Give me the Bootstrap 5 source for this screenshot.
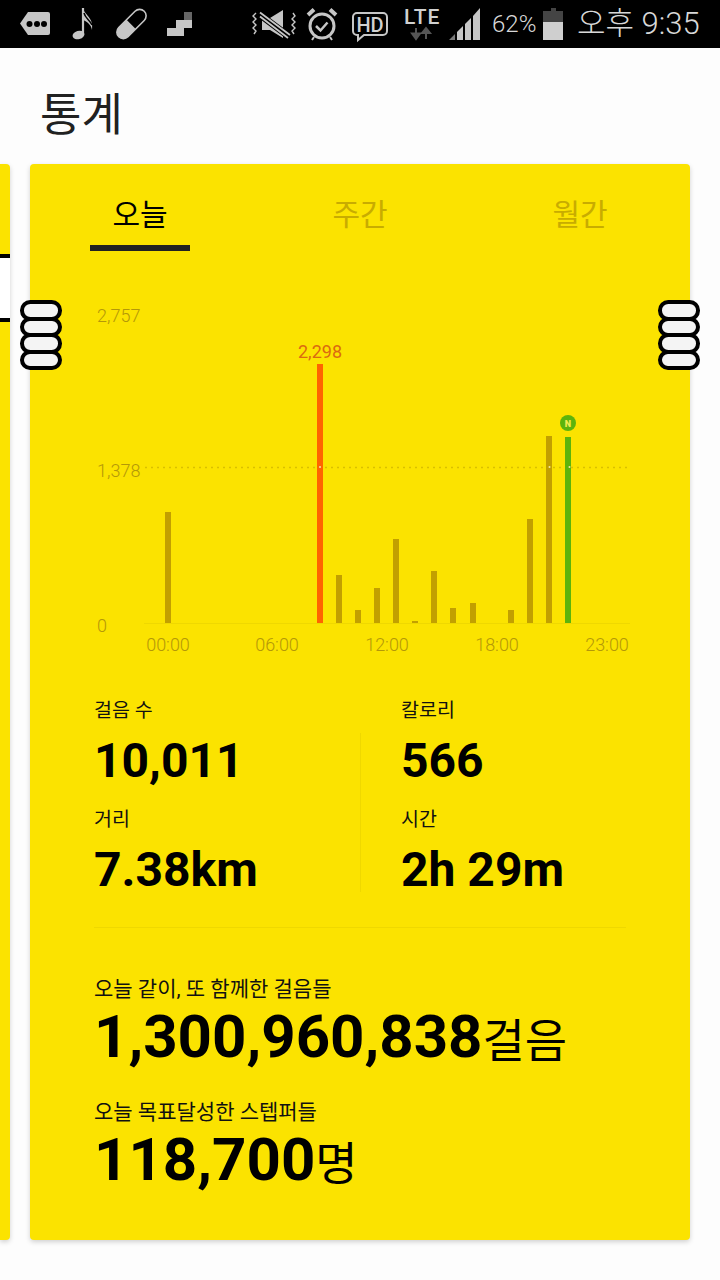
<!DOCTYPE html>
<html lang="ko">
<head>
  <meta charset="UTF-8">
  <title>통계</title>
  <link href="https://cdn.jsdelivr.net/npm/bootstrap@5.3.0/dist/css/bootstrap.min.css" rel="stylesheet">
  <style>
    body {
      width: 720px;
      height: 1280px;
      overflow: hidden;
      background: #fdfdfd;
      font-family: Roboto, "Noto Sans CJK KR", sans-serif;
      color: #000;
    }
    .status-bar {
      height: 48px;
      background: #000;
      color: #d8d8d8;
      padding: 0 20px;
    }
    .status-icons-right { margin-left: 59px; }
    .status-pct { font-size: 24px; font-weight: 300; margin-left: 12px; width: 45px; }
    .status-battery { margin-left: 6px; }
    .status-time { font-size: 31px; font-weight: 300; margin-left: 14px; white-space: nowrap; }
    .page-title {
      height: 116px;
      margin: 0;
      padding: 40px 0 0 40px;
      font-size: 45px;
      line-height: 56px;
      font-weight: 400;
      color: #212121;
    }
    .pager { height: 1076px; gap: 20px; }
    .stat-panel {
      background: #fbe300;
      border-radius: 4px;
      box-shadow: 0 2px 5px rgba(0, 0, 0, .18);
    }
    .prev-panel {
      width: 10px;
      padding-top: 90px;
      border-radius: 0 4px 4px 0;
    }
    .prev-hole {
      height: 68px;
      background: #fff;
      border-top: 4px solid #000;
      border-bottom: 4px solid #000;
    }
    .main-panel { width: 660px; }
    .tab-row { height: 87px; }
    .tab-item {
      width: 220px;
      padding-top: 30px;
      font-size: 30px;
      line-height: 42px;
      text-align: center;
      color: #c8ac00;
    }
    .tab-item.is-on { color: #000; }
    .tab-line {
      display: block;
      width: 100px;
      height: 6px;
      margin: 9px auto 0;
      background: #212121;
    }
    .chart-box { display: block; margin-top: 49px; }
    .stat-grid {
      display: grid;
      grid-template-columns: 266px 41px 1fr;
      margin: 34px 64px 0;
      padding-bottom: 27px;
      border-bottom: 1px solid #efd800;
    }
    .stat-rule {
      grid-column: 2;
      grid-row: 2 / 5;
      margin: 7px 0 8px;
      border-left: 1px solid #efd800;
    }
    .stat-label { font-size: 19.500px; line-height: 30px; color: #111; }
    .stat-value { font-size: 48px; line-height: 60px; font-weight: 700; margin: 5px 0 14px; }
    .stat-value.is-last { margin-bottom: 0; }
    .stat-a { grid-column: 1; }
    .stat-b { grid-column: 3; }
    .total-box { padding: 46px 64px 0; }
    .total-label { font-size: 21px; line-height: 30px; color: #111; }
    .total-value { font-size: 60px; line-height: 70px; font-weight: 700; margin: -2px 0 21px; white-space: nowrap; }
    .total-unit { font-size: 46px; font-weight: 400; }
    .ring-stack { position: absolute; top: 300px; width: 42px; }
    .ring-left { left: 20px; }
    .ring-right { left: 658px; }
    .ring-item {
      height: 20.500px;
      margin-bottom: -4px;
      background: #f4f4f4;
      border: 4px solid #000;
      border-radius: 10.250px;
    }
  </style>
</head>
<body class="position-relative">

<div class="status-bar d-flex align-items-center">
  <svg width="172" height="32" viewBox="20 8 172 32">
    <path d="M28 12H48a2 2 0 0 1 2 2V33a2 2 0 0 1-2 2H28L20 23.500Z" fill="#c6c6c6"/>
    <circle cx="29.500" cy="24" r="3" fill="#000"/><circle cx="37" cy="24" r="3" fill="#000"/><circle cx="44" cy="24" r="3" fill="#000"/>
    <ellipse cx="78.500" cy="35" rx="6" ry="4.200" fill="#c6c6c6" transform="rotate(-15 78.500 35)"/>
    <path d="M83 8V35" stroke="#c6c6c6" stroke-width="2.200"/>
    <path d="M83 8C84 15 94 17 92 30C91 25 88 22 83 20Z" fill="#c6c6c6"/>
    <path d="M84 13C85 18 90 20 92 25" stroke="#000" stroke-width="1.500" fill="none"/>
    <g transform="rotate(-45 131.500 24)">
      <rect x="113.500" y="17.500" width="36" height="13" rx="6.500" fill="none" stroke="#c6c6c6" stroke-width="1.600"/>
      <path d="M131 17.500H120a6.500 6.500 0 0 0 0 13H131Z" fill="#c6c6c6"/>
    </g>
    <path d="M167 28H176V20H192V28H184V36H167Z" fill="#c6c6c6"/>
    <rect x="184" y="12" width="8" height="8" fill="#666"/>
  </svg>
  <svg class="status-icons-right" width="229" height="48" viewBox="251 0 229 48">
    <path d="M256 13l-3 3 3 3-3 3 3 3-3 3 3 3-2 3M293 13l2 3-3 3 3 3-3 3 3 3-3 3 2 3" fill="none" stroke="#c6c6c6" stroke-width="1.400"/>
    <path d="M262 18H270L283 10V38L270 30H262Z" fill="#c6c6c6"/>
    <path d="M259 14L291 38" stroke="#000" stroke-width="7"/>
    <path d="M260 12.500L290 35M260 16.500L288 38" stroke="#c6c6c6" stroke-width="1.800"/>
    <circle cx="322" cy="26" r="12" fill="none" stroke="#c6c6c6" stroke-width="3"/>
    <path d="M316 26l4.500 4.500 7-8" fill="none" stroke="#c6c6c6" stroke-width="2.500"/>
    <path d="M308 15L314 9.500M336 15L330 9.500" stroke="#c6c6c6" stroke-width="4"/>
    <path d="M314 37l-2 3M330 37l2 3" stroke="#c6c6c6" stroke-width="2"/>
    <path d="M357 13H383a4 4 0 0 1 4 4V31a4 4 0 0 1-4 4H364L358 40V35H357a4 4 0 0 1-4-4V17a4 4 0 0 1 4-4Z" fill="none" stroke="#c6c6c6" stroke-width="2"/>
    <text x="370" y="31.500" text-anchor="middle" font-family="Roboto, sans-serif" font-size="20" font-weight="500" fill="#d0d0d0">HD</text>
    <text x="404" y="24" font-family="Roboto, sans-serif" font-size="21" font-weight="500" letter-spacing="1" fill="#d0d0d0">LTE</text>
    <path d="M416 28V37M412 33.500L416 39L420 33.500Z" stroke="#555" stroke-width="2" fill="#555"/>
    <path d="M426 39V30M422 33L426 28L430 33Z" stroke="#555" stroke-width="2" fill="#555"/>
    <path d="M449 40L455 34V40Z" fill="#777"/>
    <path d="M457 32L463 26V40H457Z" fill="#c6c6c6"/>
    <path d="M465 24L471 18V40H465Z" fill="#c6c6c6"/>
    <path d="M473 16L480 8V40H473Z" fill="#c6c6c6"/>
  </svg>
  <span class="status-pct">62%</span>
  <svg class="status-battery" width="20" height="32" viewBox="543 8 20 32">
    <path d="M551 8H556V11H563V22H543V11H551Z" fill="#444"/>
    <rect x="543" y="22" width="20" height="18" fill="#cfcfcf"/>
  </svg>
  <span class="status-time">오후 9:35</span>
</div>

<h1 class="page-title">통계</h1>

<div class="pager d-flex">
  <div class="stat-panel prev-panel flex-shrink-0">
    <div class="prev-hole"></div>
  </div>

  <div class="stat-panel main-panel flex-shrink-0">
    <div class="tab-row d-flex">
      <div class="tab-item is-on">오늘<span class="tab-line"></span></div>
      <div class="tab-item">주간</div>
      <div class="tab-item">월간</div>
    </div>

    <svg class="chart-box" width="660" height="362" viewBox="30 300 660 362" font-family="Roboto, sans-serif" font-size="18" font-weight="300" fill="#b49808">
      <path d="M144 623.500H630" stroke="#efd800" stroke-width="1"/>
      <path d="M145 467.500H630" stroke="#d9c000" stroke-width="1.500" stroke-dasharray="2 4"/>
      <text x="97" y="322">2,757</text>
      <text x="97" y="476.500">1,378</text>
      <text x="97" y="632">0</text>
      <g fill="#c2a000">
        <rect x="165" y="512" width="6" height="111"/>
        <rect x="336" y="575" width="6" height="48"/>
        <rect x="355" y="610" width="6" height="13"/>
        <rect x="374" y="588" width="6" height="35"/>
        <rect x="393" y="539" width="6" height="84"/>
        <rect x="412" y="621" width="6" height="2"/>
        <rect x="431" y="571" width="6" height="52"/>
        <rect x="450" y="608" width="6" height="15"/>
        <rect x="470" y="603" width="6" height="20"/>
        <rect x="508" y="610" width="6" height="13"/>
        <rect x="527" y="519" width="6" height="104"/>
        <rect x="546" y="436" width="6" height="187"/>
      </g>
      <rect x="317" y="364" width="6" height="259" fill="#ff6400"/>
      <rect x="565" y="437" width="6" height="186" fill="#5cb40c"/>
      <g fill="#f5e9a0">
        <circle cx="320" cy="467" r="1"/><circle cx="549.500" cy="467" r="1"/><circle cx="569.500" cy="467" r="1"/>
      </g>
      <text x="320" y="358" text-anchor="middle" fill="#dc6a10" font-weight="400">2,298</text>
      <circle cx="568" cy="423" r="8" fill="#5cb40c"/>
      <text x="568" y="426.500" text-anchor="middle" font-size="9" font-weight="900" fill="#f3ec50">N</text>
      <text x="168" y="651" text-anchor="middle">00:00</text>
      <text x="277" y="651" text-anchor="middle">06:00</text>
      <text x="387" y="651" text-anchor="middle">12:00</text>
      <text x="497" y="651" text-anchor="middle">18:00</text>
      <text x="607" y="651" text-anchor="middle">23:00</text>
    </svg>

    <div class="stat-grid">
      <div class="stat-label stat-a">걸음 수</div>
      <div class="stat-label stat-b">칼로리</div>
      <div class="stat-rule"></div>
      <div class="stat-value stat-a">10,011</div>
      <div class="stat-value stat-b">566</div>
      <div class="stat-label stat-a">거리</div>
      <div class="stat-label stat-b">시간</div>
      <div class="stat-value is-last stat-a">7.38km</div>
      <div class="stat-value is-last stat-b">2h 29m</div>
    </div>

    <div class="total-box">
      <div class="total-label">오늘 같이, 또 함께한 걸음들</div>
      <div class="total-value">1,300,960,838<span class="total-unit">걸음</span></div>
      <div class="total-label">오늘 목표달성한 스텝퍼들</div>
      <div class="total-value">118,700<span class="total-unit">명</span></div>
    </div>
  </div>
</div>

<div class="ring-stack ring-left">
  <div class="ring-item"></div><div class="ring-item"></div><div class="ring-item"></div><div class="ring-item"></div>
</div>
<div class="ring-stack ring-right">
  <div class="ring-item"></div><div class="ring-item"></div><div class="ring-item"></div><div class="ring-item"></div>
</div>

<script src="https://cdn.jsdelivr.net/npm/bootstrap@5.3.0/dist/js/bootstrap.bundle.min.js"></script>
</body>
</html>
